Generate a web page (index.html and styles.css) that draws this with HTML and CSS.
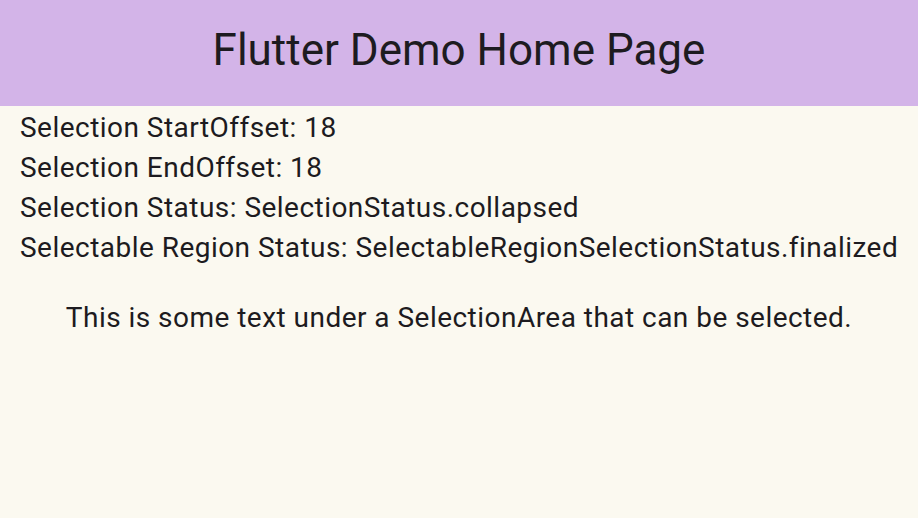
FILE: index.html
```html
<!DOCTYPE html>
<html>
<head>
<meta charset="utf-8">
<link rel="stylesheet" href="styles.css">
</head>
<body>
<header class="appbar"><h1 class="title">Flutter Demo Home Page</h1></header>
<main class="content">
  <div class="status">
    <p class="line">Selection StartOffset: 18</p>
    <p class="line">Selection EndOffset: 18</p>
    <p class="line">Selection Status: SelectionStatus.collapsed</p>
    <p class="line">Selectable Region Status: SelectableRegionSelectionStatus.finalized</p>
  </div>
  <p class="selectable">This is some text under a SelectionArea that can be selected.</p>
</main>
</body>
</html>
```
FILE: styles.css
```css
html, body {
  margin: 0;
  padding: 0;
  width: 918px;
  height: 518px;
  overflow: hidden;
  background: #fbf9f0;
  font-family: Roboto, "Noto Sans", sans-serif;
  color: #1d1b20;
}
.appbar {
  box-sizing: border-box;
  height: 106px;
  padding-bottom: 6px;
  background: #d3b4e8;
  display: flex;
  align-items: center;
  justify-content: center;
}
.title {
  margin: 0;
  font-weight: 400;
  font-size: 44px;
  line-height: 48px;
}
.content {
  padding: 2px 20px 0;
}
.line {
  margin: 0;
  font-size: 28px;
  letter-spacing: 0.47px;
  line-height: 40px;
  white-space: nowrap;
}
.selectable {
  margin: 30px 0 0;
  text-align: center;
  font-size: 28px;
  letter-spacing: 0.47px;
  line-height: 40px;
}
```
